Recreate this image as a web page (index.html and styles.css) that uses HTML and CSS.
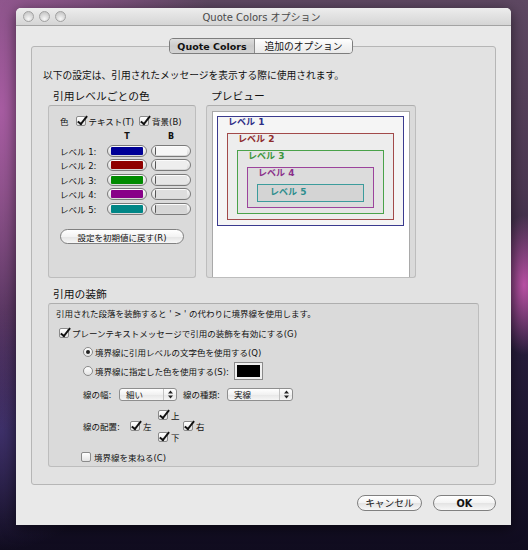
FILE: index.html
```html
<!DOCTYPE html>
<html lang="ja">
<head>
<meta charset="utf-8">
<title>Quote Colors オプション</title>
<link rel="stylesheet" href="styles.css">
</head>
<body>
<div class="window">
  <div class="titlebar">
    <div class="lights"><span></span><span></span><span></span></div>
    <div class="title">Quote Colors オプション</div>
  </div>
  <div class="content">
    <div class="tabbox">
      <div class="tabs"><span class="tab sel">Quote Colors</span><span class="tab">追加のオプション</span></div>
      <div class="desc">以下の設定は、引用されたメッセージを表示する際に使用されます。</div>
      <div class="cols">
        <div class="col">
          <div class="heading">引用レベルごとの色</div>
          <div class="group colors">
            <div class="row1">
              <span class="clr">色</span>
              <span class="ck"><span class="cb on"></span>テキスト(T)</span>
              <span class="ck second"><span class="cb on"></span>背景(B)</span>
            </div>
            <div class="wells">
              <span></span><span class="hd">T</span><span class="hd">B</span>
              <span>レベル 1:</span><span class="well"><i class="c1"></i></span><span class="well"><i class="b1"></i></span>
              <span>レベル 2:</span><span class="well"><i class="c2"></i></span><span class="well"><i class="b2"></i></span>
              <span>レベル 3:</span><span class="well"><i class="c3"></i></span><span class="well"><i class="b3"></i></span>
              <span>レベル 4:</span><span class="well"><i class="c4"></i></span><span class="well"><i class="b4"></i></span>
              <span>レベル 5:</span><span class="well"><i class="c5"></i></span><span class="well"><i class="b5"></i></span>
            </div>
            <div class="btn reset">設定を初期値に戻す(R)</div>
          </div>
        </div>
        <div class="col">
          <div class="heading">プレビュー</div>
          <div class="group preview">
            <div class="tv">
              <div class="q q1"><div class="lbl">レベル 1</div>
                <div class="q q2"><div class="lbl">レベル 2</div>
                  <div class="q q3"><div class="lbl">レベル 3</div>
                    <div class="q q4"><div class="lbl">レベル 4</div>
                      <div class="q q5"><div class="lbl">レベル 5</div></div>
                    </div>
                  </div>
                </div>
              </div>
            </div>
          </div>
        </div>
      </div>
      <div class="section">
        <div class="heading">引用の装飾</div>
        <div class="group deco">
          <div class="r-desc">引用された段落を装飾すると ' &gt; ' の代わりに境界線を使用します。</div>
          <div class="r-check ck"><span class="cb on"></span>プレーンテキストメッセージで引用の装飾を有効にする(G)</div>
          <div class="r-radio1 ck"><span class="rb on"></span>境界線に引用レベルの文字色を使用する(Q)</div>
          <div class="r-radio2 ck"><span class="rb"></span>境界線に指定した色を使用する(S):<span class="blackwell"><i></i></span></div>
          <div class="r-pop">
            <span class="plabel w1">線の幅:</span>
            <span class="popup p1">細い<span class="ar"><svg width="5" height="9" viewBox="0 0 5 9"><path d="M0 3.5 L2.5 0.5 L5 3.5 Z M0 5.5 L2.5 8.5 L5 5.5 Z" fill="#222"/></svg></span></span>
            <span class="plabel w2">線の種類:</span>
            <span class="popup p2">実線<span class="ar"><svg width="5" height="9" viewBox="0 0 5 9"><path d="M0 3.5 L2.5 0.5 L5 3.5 Z M0 5.5 L2.5 8.5 L5 5.5 Z" fill="#222"/></svg></span></span>
          </div>
          <div class="place">
            <span class="pl-label">線の配置:</span>
            <span class="ck pl-left"><span class="cb on"></span>左</span>
            <span class="ck pl-top"><span class="cb on"></span>上</span>
            <span class="ck pl-bottom"><span class="cb on"></span>下</span>
            <span class="ck pl-right"><span class="cb on"></span>右</span>
          </div>
          <div class="r-merge ck"><span class="cb"></span>境界線を束ねる(C)</div>
        </div>
      </div>
    </div>
    <div class="buttons">
      <div class="btn pb cancel">キャンセル</div>
      <div class="btn pb ok">OK</div>
    </div>
  </div>
</div>
</body>
</html>
```
FILE: styles.css
```css
* { box-sizing: border-box; }
html, body { margin: 0; padding: 0; }
body {
  width: 528px;
  height: 550px;
  overflow: hidden;
  padding: 8px 0 0 16px;
  font-family: "DejaVu Sans", "Noto Sans CJK JP", sans-serif;
  font-size: 9.75px;
  color: #111;
  white-space: nowrap;
  background:
    radial-gradient(ellipse 30px 70px at 524px 285px, rgba(200, 85, 175, .9), rgba(200, 85, 175, 0)),
    radial-gradient(ellipse 220px 320px at 0px 110px, rgba(172, 94, 166, .95), rgba(172, 94, 166, 0)),
    radial-gradient(ellipse 120px 120px at 0px 430px, rgba(70, 55, 120, .8), rgba(70, 55, 120, 0)),
    linear-gradient(to bottom, #5e4862 0%, #4a3650 35%, #261c3a 65%, #100c1f 100%);
}
.window {
  width: 495px;
  height: 517px;
  background: #e9e9e9;
  border-radius: 5px 5px 0 0;
  box-shadow: 0 3px 14px rgba(0, 0, 0, .55);
  display: flex;
  flex-direction: column;
}
.titlebar {
  height: 18px;
  display: flex;
  align-items: center;
  background: linear-gradient(#ededed, #d5d5d5);
  border-bottom: 1px solid #a3a3a3;
  border-radius: 5px 5px 0 0;
}
.lights { display: flex; gap: 5px; padding-left: 7px; }
.lights span {
  width: 11px; height: 11px; border-radius: 50%;
  border: 1px solid #a2a2a2;
  background: radial-gradient(circle at 50% 75%, #f7f7f7, #d3d3d3 60%, #bdbdbd);
}
.title { flex: 1; text-align: center; margin-right: 54px; color: #4a4a4a; font-size: 10px; }

.content { padding: 20px 15px 0 15px; }
.tabbox {
  height: 439px;
  border: 1px solid #b6b6b6;
  border-radius: 3px;
  background: #e2e2e2;
  display: flex;
  flex-direction: column;
}
.tabs {
  display: flex;
  align-self: center;
  margin: -9px 0 0 -5px;
  height: 16px;
  border: 1px solid #7d7d7d;
  border-radius: 4px;
  overflow: hidden;
}
.tab { display: flex; align-items: center; justify-content: center; }
.tab.sel {
  width: 85px;
  font-weight: bold;
  font-size: 9.5px;
  background: linear-gradient(#dedede, #cbcbcb 50%, #d3d3d3);
  border-right: 1px solid #8c8c8c;
}
.tab:not(.sel) { width: 97px; background: linear-gradient(#ffffff, #f3f3f3 50%, #e9e9e9); }

.desc { margin: 16px 0 0 11px; line-height: 12px; }
.cols { display: flex; gap: 10px; margin: 8px 0 0 16px; }
.heading { font-size: 10.75px; line-height: 14px; padding-left: 5px; margin-bottom: 1px; }
.group {
  border: 1px solid #bdbdbd;
  border-top-color: #aeaeae;
  border-radius: 3px;
  background: #dadada;
}
.colors { width: 148px; height: 173px; padding: 9px 0 0 11px; font-size: 8.5px; }
.preview { width: 210px; height: 173px; padding: 5px 5px 0 5px; }

.ck { display: flex; align-items: center; gap: 3px; }
.cb {
  position: relative;
  width: 10px; height: 10px;
  border: 1px solid #8a8a8a;
  border-radius: 2px;
  background: linear-gradient(#ffffff, #e4e4e4);
  flex: none;
}
.cb.on::after {
  content: "";
  position: absolute;
  left: 3px; top: -3px;
  width: 3px; height: 9px;
  border: solid #111;
  border-width: 0 2px 2px 0;
  transform: rotate(38deg);
}
.rb {
  position: relative;
  width: 10px; height: 10px;
  border: 1px solid #8a8a8a;
  border-radius: 50%;
  background: linear-gradient(#ffffff, #e4e4e4);
  flex: none;
}
.rb.on::after {
  content: "";
  position: absolute;
  left: 2px; top: 2px;
  width: 4px; height: 4px;
  border-radius: 50%;
  background: #222;
}

.row1 { display: flex; align-items: center; height: 12px; }
.clr { margin-right: 7px; }
.second { margin-left: 5px; }
.wells {
  display: grid;
  grid-template-columns: 43px 40px 40px;
  column-gap: 4px;
  grid-auto-rows: 14.5px;
  align-items: center;
  margin-top: 2px;
}
.hd { text-align: center; font-weight: bold; font-size: 8px; }
.well {
  height: 12px;
  border: 1px solid #7a7a7a;
  border-radius: 6px;
  background: linear-gradient(#fdfdfd, #d7d7d7);
  padding: 1px 3px;
}
.well i { display: block; height: 100%; border-radius: 1px; }
.c1 { background: #000096; }
.c2 { background: #8f0000; }
.c3 { background: #008a00; }
.c4 { background: #880088; }
.c5 { background: #008686; }
.b1, .b2, .b3, .b4, .b5 { border-left: 1px solid #555; }
.b1 { background: #f6f6f6; }
.b2 { background: #eeeeee; }
.b3 { background: #e6e6e6; }
.b4 { background: #dedede; }
.b5 { background: #d6d6d6; }

.btn {
  display: flex; align-items: center; justify-content: center;
  border: 1px solid #808080;
  border-radius: 8px;
  background: linear-gradient(#ffffff, #f3f3f3 50%, #e3e3e3 51%, #f7f7f7);
}
.reset { width: 124px; height: 15px; margin-top: 13px; font-size: 8.5px; }

.tv {
  height: 100%;
  background: #ffffff;
  border: 1px solid #a9a9a9;
  border-bottom: none;
  padding: 4px 5px 0 4px;
}
.q { border: 1px solid; padding: 0 9px 5px 9px; }
.lbl { height: 16px; line-height: 11px; padding-left: 1px; font-size: 9px; font-weight: bold; }
.q1 { border-color: #3a3a8e; background: #f5f5f5; color: #2e2e86; }
.q2 { border-color: #a24a4a; background: #ededed; color: #8e2c2c; }
.q3 { border-color: #4aa24a; background: #e5e5e5; color: #3c963c; }
.q4 { border-color: #9c449c; background: #dcdcdc; color: #8a308a; }
.q5 { border-color: #3c9c9c; background: #d4d4d4; color: #2e8e8e; height: 18px; padding-bottom: 0; }
.q5 .lbl { line-height: 15px; padding-left: 3px; }

.section { margin: 10px 0 0 16px; }
.deco { width: 431px; height: 164px; font-size: 8.5px; }
.r-desc { margin: 4px 0 0 7px; line-height: 12px; }
.r-check { margin: 6px 0 0 10px; height: 14px; gap: 3px; }
.r-radio1 { margin: 5px 0 0 34px; height: 14px; gap: 2px; }
.r-radio2 { margin: 3px 0 0 34px; height: 18px; gap: 2px; }
.blackwell {
  width: 29px; height: 18px;
  margin-left: 3px;
  border: 1px solid #8a8a8a;
  background: #f0f0f0;
  padding: 2px;
}
.blackwell i { display: block; height: 100%; background: #000; }
.r-pop { display: flex; align-items: center; margin: 7px 0 0 34px; height: 14px; }
.plabel.w1 { width: 36px; }
.plabel.w2 { width: 44px; margin-left: 6px; }
.popup {
  display: flex; align-items: center;
  height: 13px;
  border: 1px solid #8e8e8e;
  border-radius: 3px;
  background: linear-gradient(#ffffff, #f1f1f1 50%, #e6e6e6 51%, #f5f5f5);
  padding-left: 6px;
}
.p1 { width: 58px; }
.p2 { width: 66px; }
.ar {
  margin-left: auto;
  width: 13px; height: 100%;
  border-left: 1px solid #c2c2c2;
  display: flex; align-items: center; justify-content: center;
}
.place {
  display: grid;
  grid-template-columns: 47px 28px 25px auto;
  grid-template-rows: 11px 11px 11px;
  align-items: center;
  margin: 8px 0 0 34px;
}
.pl-label { grid-row: 2; grid-column: 1; }
.pl-left { grid-row: 2; grid-column: 2; }
.pl-top { grid-row: 1; grid-column: 3; }
.pl-bottom { grid-row: 3; grid-column: 3; }
.pl-right { grid-row: 2; grid-column: 4; }
.r-merge { margin: 8px 0 0 32px; height: 14px; }

.buttons { display: flex; justify-content: flex-end; gap: 11px; margin-top: 10px; }
.pb { height: 16px; font-size: 9.75px; }
.cancel { width: 65px; }
.ok { width: 63px; font-weight: bold; }
```
